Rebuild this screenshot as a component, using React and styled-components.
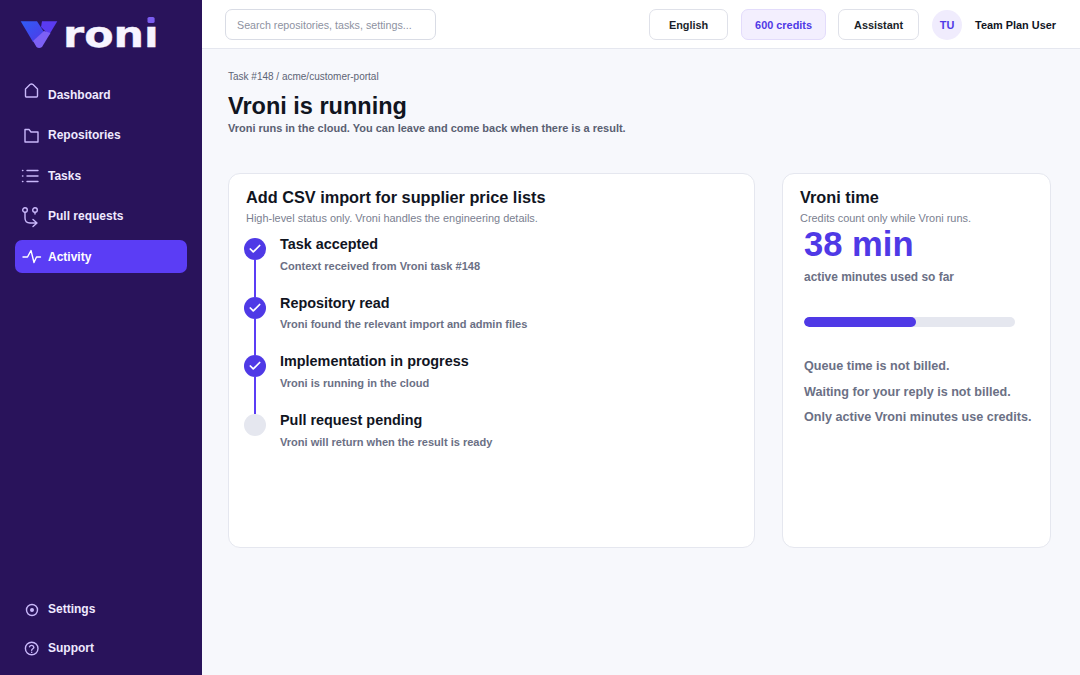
import React from 'react'
import styled, { createGlobalStyle } from 'styled-components'
import { Check } from 'lucide-react'

const GlobalStyle = createGlobalStyle`
  html, body { margin: 0; padding: 0; height: 100%; }
  body { font-family: "Liberation Sans", Arial, sans-serif; background: #f7f8fc; color: #11151f; }
  * { box-sizing: border-box; }
`

const Shell = styled.div`
  display: flex;
  width: 1080px;
  height: 675px;
  overflow: hidden;
`

const Sidebar = styled.aside`
  width: 202px;
  flex: none;
  background: #29135b;
  display: flex;
  flex-direction: column;
  padding: 16px 15px 0;
`

const Logo = styled.div`
  display: flex;
  align-items: center;
  height: 36px;
  padding-left: 5px;
  margin-bottom: 25.500px;
`

const LogoWord = styled.span`
  font-family: "DejaVu Sans", sans-serif;
  font-weight: 700;
  font-size: 36px;
  line-height: 36px;
  color: #f7f4ff;
  margin-left: 5px;
  position: relative;
  top: 1px;
  transform: scaleX(1.19);
  transform-origin: left center;
  -webkit-text-stroke: 0.4px #f7f4ff;
`

const LogoDotless = styled.span`
  position: relative;
  &::after {
    content: '';
    position: absolute;
    left: 3px;
    top: 3px;
    width: 6px;
    height: 6px;
    border-radius: 1.500px;
    background: #7b5cf0;
  }
`

const Nav = styled.nav`
  display: flex;
  flex-direction: column;
  gap: 7px;
`

const NavItem = styled.a`
  display: flex;
  align-items: center;
  gap: 8px;
  height: 33.500px;
  padding: 1px 0 0 7px;
  border-radius: 7px;
  font-size: 12px;
  font-weight: 700;
  color: ${p => (p.$active ? '#ffffff' : '#efe9ff')};
  background: ${p => (p.$active ? '#5b3df5' : 'transparent')};
  svg { flex: none; overflow: visible; margin-top: -1px; color: ${p => (p.$active ? '#ffffff' : '#c9b8fa')}; }
`

const FootNav = styled(Nav)`
  margin-top: auto;
  gap: 5.500px;
  padding-bottom: 10.500px;
`

const Main = styled.div`
  flex: 1;
  display: flex;
  flex-direction: column;
  min-width: 0;
`

const Topbar = styled.header`
  height: 49px;
  flex: none;
  background: #ffffff;
  border-bottom: 1px solid #e5e7ef;
  display: flex;
  align-items: center;
  padding: 1px 24px 0 23px;
`

const Search = styled.div`
  width: 211px;
  height: 31px;
  border: 1px solid #d9dce5;
  border-radius: 7px;
  padding-left: 11px;
  display: flex;
  align-items: center;
  font-size: 10.700px;
  color: #8d92a1;
  margin-right: auto;
`

const TopButton = styled.div`
  height: 31px;
  width: ${p => p.$w}px;
  margin-left: ${p => p.$ml}px;
  border-radius: 7px;
  border: 1px solid ${p => (p.$tint ? '#e3dcfb' : '#dfe1e9')};
  background: ${p => (p.$tint ? '#f3effe' : '#ffffff')};
  color: ${p => (p.$tint ? '#4f39e6' : '#1b1f2a')};
  font-size: 10.900px;
  font-weight: 700;
  display: flex;
  align-items: center;
  justify-content: center;
`

const Avatar = styled.div`
  width: 30px;
  height: 30px;
  border-radius: 50%;
  background: #f0ecfd;
  color: #4f39e6;
  font-size: 10.900px;
  font-weight: 700;
  margin-left: 13px;
  display: flex;
  align-items: center;
  justify-content: center;
`

const UserName = styled.span`
  font-size: 10.900px;
  font-weight: 700;
  color: #11151f;
  margin-left: 13px;
`

const Content = styled.main`
  flex: 1;
  padding: 22px 29px 0 26px;
`

const Crumb = styled.div`
  font-size: 10px;
  line-height: 12px;
  color: #5e6475;
`

const PageTitle = styled.h1`
  margin: 8px 0 0;
  font-size: 23.500px;
  line-height: 30px;
  font-weight: 700;
  color: #11151f;
`

const PageSub = styled.p`
  margin: 0;
  font-size: 10.980px;
  line-height: 14px;
  font-weight: 700;
  color: #5a6072;
`

const Cards = styled.div`
  display: grid;
  grid-template-columns: 527px 269px;
  gap: 27px;
  margin-top: 38px;
`

const Card = styled.section`
  height: 375px;
  background: #ffffff;
  border: 1px solid #e5e7ef;
  border-radius: 12px;
  padding: 13px 17px;
`

const CardTitle = styled.h2`
  margin: 0;
  font-size: 16.300px;
  line-height: 20px;
  font-weight: 700;
  color: #11151f;
`

const CardSub = styled.p`
  margin: 4px 0 0;
  font-size: 10.950px;
  line-height: 14px;
  color: #7a8090;
`

const Steps = styled.div`
  display: flex;
  flex-direction: column;
  margin: 11.300px 0 0 -2px;
`

const Step = styled.div`
  position: relative;
  display: flex;
  gap: 14px;
  height: 58.600px;
`

const Dot = styled.div`
  width: 22px;
  height: 22px;
  flex: none;
  border-radius: 50%;
  background: ${p => (p.$done ? '#4f39e6' : '#e5e7ef')};
  color: #fff;
  display: flex;
  align-items: center;
  justify-content: center;
  position: relative;
  z-index: 1;
  margin-top: 2px;
`

const Rail = styled.div`
  position: absolute;
  left: 10px;
  top: 24px;
  bottom: -2px;
  width: 2px;
  background: #5b3df5;
`

const StepTitle = styled.div`
  margin-top: -1px;
  font-size: 14.400px;
  line-height: 18px;
  font-weight: 700;
  color: #11151f;
`

const StepText = styled.div`
  margin-top: 5.500px;
  font-size: 11.050px;
  line-height: 14px;
  font-weight: 700;
  color: #6b7085;
`

const TimeCard = styled(Card)`
  padding-right: 10px;
`

const Inset = styled.div`
  padding-left: 4px;
`

const BigNumber = styled.div`
  margin-top: -1px;
  font-size: 34.600px;
  line-height: 40px;
  font-weight: 700;
  color: #4f39e6;
`

const BigCaption = styled.div`
  font-size: 11.950px;
  line-height: 14px;
  font-weight: 700;
  color: #6b7085;
  margin-top: 6px;
`

const Track = styled.div`
  width: 211px;
  height: 9.500px;
  border-radius: 5px;
  background: #e5e7ef;
  margin-top: 33px;
  overflow: hidden;
`

const Fill = styled.div`
  height: 100%;
  background: #4f39e6;
  border-radius: 5px;
`

const Notes = styled.div`
  margin-top: 31.500px;
  display: flex;
  flex-direction: column;
  gap: 8px;
  font-size: 12.600px;
  line-height: 17.500px;
  font-weight: 700;
  color: #6b7085;
  white-space: nowrap;
`

const Icon = ({ children }) => (
  <svg width="18" height="18" viewBox="0 0 18 18" fill="none" stroke="currentColor" strokeWidth="1.4" strokeLinecap="round" strokeLinejoin="round">
    {children}
  </svg>
)

const LogoMark = () => (
  <svg width="38" height="30" viewBox="0 0 38 30">
    <defs>
      <linearGradient id="vl" x1="0" y1="0" x2="1" y2="1">
        <stop offset="0" stopColor="#2f5cf7" />
        <stop offset="1" stopColor="#4f39e6" />
      </linearGradient>
    </defs>
    <path d="M.7 2.300H17L24 13 13 23z" fill="url(#vl)" />
    <path d="M22 2.300H37.300L29 16 21 8z" fill="#5a3bf0" />
    <path d="M24 12L13 22l3.500 6q2.500 2 5.500 0L30.500 14z" fill="#7d60f5" />
  </svg>
)

const steps = [
  ['Task accepted', 'Context received from Vroni task #148', true],
  ['Repository read', 'Vroni found the relevant import and admin files', true],
  ['Implementation in progress', 'Vroni is running in the cloud', true],
  ['Pull request pending', 'Vroni will return when the result is ready', false],
]

export default function App() {
  return (
    <Shell>
      <GlobalStyle />
      <Sidebar>
        <Logo>
          <LogoMark />
          <LogoWord>ron<LogoDotless>ı</LogoDotless></LogoWord>
        </Logo>
        <Nav>
          <NavItem>
            <Icon><path d="M3.500 4L8 -.5q1.500-1 3 0L15.500 4v7a1 1 0 0 1-1 1h-10a1 1 0 0 1-1-1z" /></Icon>
            Dashboard
          </NavItem>
          <NavItem>
            <Icon><path d="M3 3.500h4l2 2.500h7v10H3z" /></Icon>
            Repositories
          </NavItem>
          <NavItem>
            <Icon><path d="M5 4.500h11M5 10h11M5 15.500h11M.5 4.500h.4M.5 10h.4M.5 15.500h.4" /></Icon>
            Tasks
          </NavItem>
          <NavItem>
            <Icon>
              <circle cx="3" cy="3" r="2.300" />
              <circle cx="13" cy="3" r="2.300" />
              <path d="M3 5.500V11q0 5 5 5h7M11 12.500L15 16l-4 3.500M13 5.500V7" />
            </Icon>
            Pull requests
          </NavItem>
          <NavItem $active>
            <Icon><path d="M1 10h4.500L9 3.500l3 12 2.500-5.500h4" /></Icon>
            Activity
          </NavItem>
        </Nav>
        <FootNav>
          <NavItem>
            <Icon><circle cx="10" cy="10" r="5.500" /><circle cx="10" cy="10" r="1.300" fill="currentColor" /></Icon>
            Settings
          </NavItem>
          <NavItem>
            <Icon><circle cx="9.700" cy="9.500" r="6.300" /><path d="M7.500 7.800a2.300 2.300 0 0 1 4.400.5c0 1.300-2.200 1.700-2.200 3M9.700 13.300v.1" /></Icon>
            Support
          </NavItem>
        </FootNav>
      </Sidebar>
      <Main>
        <Topbar>
          <Search>Search repositories, tasks, settings...</Search>
          <TopButton $w={79} $ml={0}>English</TopButton>
          <TopButton $w={85} $ml={13} $tint>600 credits</TopButton>
          <TopButton $w={81} $ml={12}>Assistant</TopButton>
          <Avatar>TU</Avatar>
          <UserName>Team Plan User</UserName>
        </Topbar>
        <Content>
          <Crumb>Task #148 / acme/customer-portal</Crumb>
          <PageTitle>Vroni is running</PageTitle>
          <PageSub>Vroni runs in the cloud. You can leave and come back when there is a result.</PageSub>
          <Cards>
            <Card>
              <CardTitle>Add CSV import for supplier price lists</CardTitle>
              <CardSub>High-level status only. Vroni handles the engineering details.</CardSub>
              <Steps>
                {steps.map(([title, text, done], i) => (
                  <Step key={title}>
                    <Dot $done={done}>{done && <Check size={14} strokeWidth={3} />}</Dot>
                    {i < steps.length - 1 && <Rail />}
                    <div>
                      <StepTitle>{title}</StepTitle>
                      <StepText>{text}</StepText>
                    </div>
                  </Step>
                ))}
              </Steps>
            </Card>
            <TimeCard>
              <CardTitle>Vroni time</CardTitle>
              <CardSub>Credits count only while Vroni runs.</CardSub>
              <Inset>
                <BigNumber>38 min</BigNumber>
                <BigCaption>active minutes used so far</BigCaption>
                <Track><Fill style={{ width: '53%' }} /></Track>
                <Notes>
                  <span>Queue time is not billed.</span>
                  <span>Waiting for your reply is not billed.</span>
                  <span>Only active Vroni minutes use credits.</span>
                </Notes>
              </Inset>
            </TimeCard>
          </Cards>
        </Content>
      </Main>
    </Shell>
  )
}
